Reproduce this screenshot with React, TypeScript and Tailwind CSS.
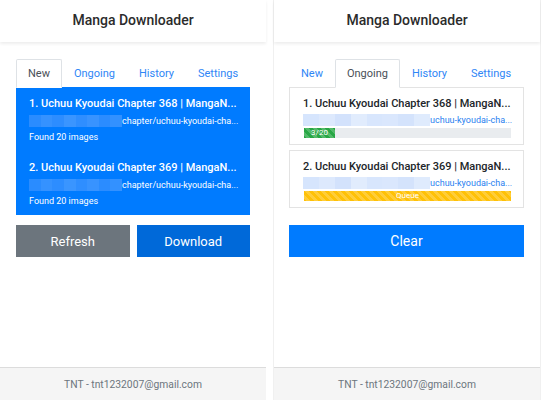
import React from "react";

const FONT = "font-['Roboto','Noto_Sans',sans-serif]";

const STRIPES =
  "bg-[linear-gradient(45deg,rgba(255,255,255,.2)_25%,transparent_25%,transparent_50%,rgba(255,255,255,.2)_50%,rgba(255,255,255,.2)_75%,transparent_75%,transparent)] bg-[length:8px_8px]";

function Header() {
  return (
    <div className="relative z-10 flex h-[42px] shrink-0 items-center justify-center pb-[1px] shadow-[0_2px_3px_rgba(0,0,0,0.07)]">
      <span className="text-[14px] font-medium text-[#2b2b2b]">Manga Downloader</span>
    </div>
  );
}

function Footer() {
  return (
    <div className="mt-auto flex h-[33px] shrink-0 items-center justify-center border-t border-[#dcdcdc] bg-[#f5f5f5] pt-[1px] text-[10.3px] text-[#6c757d]">
      TNT - tnt1232007@gmail.com
    </div>
  );
}

function Tabs({ active }: { active: string }) {
  const tabs = ["New", "Ongoing", "History", "Settings"];
  return (
    <div className="flex border-b border-[#e3e3e3]">
      {tabs.map((t) =>
        t === active ? (
          <div
            key={t}
            className="-mb-px rounded-t-[2px] border border-[#dee2e6] border-b-white bg-white px-[11px] pb-[3px] pt-[5px] text-[11px] leading-[18px] text-[#495057]"
          >
            {t}
          </div>
        ) : (
          <div
            key={t}
            className="border border-transparent px-[11px] pb-[3px] pt-[5px] text-[11px] leading-[18px] text-[#2f86f6]"
          >
            {t}
          </div>
        )
      )}
    </div>
  );
}

function BlurBlocks({ light }: { light: boolean }) {
  const cols = light
    ? ["#d6e5fd", "#dde9fd", "#d3e2fc", "#e1ecfd", "#d8e6fd", "#dae7fd", "#d4e3fc", "#dfebfd"]
    : ["#2a8cff", "#3592ff", "#2d8dff", "#3a95ff", "#2f8eff", "#3893ff", "#2b8cff", "#3391ff"];
  return (
    <div className="flex h-[12px] overflow-hidden">
      {cols.map((c, i) => (
        <div key={i} className="h-full flex-1" style={{ backgroundColor: c }} />
      ))}
    </div>
  );
}

function NewItem({ n, ch }: { n: number; ch: number }) {
  return (
    <div className="pb-[6px] pl-[13px] pr-[10px] pt-[9px]">
      <div className="overflow-hidden whitespace-nowrap text-[11px] font-medium leading-4">
        {n}. Uchuu Kyoudai Chapter {ch} | MangaN...
      </div>
      <div className="mt-px flex items-center leading-4">
        <div className="w-[93px] shrink-0">
          <BlurBlocks light={false} />
        </div>
        <span className="whitespace-nowrap text-[9px]">chapter/uchuu-kyoudai-cha...</span>
      </div>
      <div className="text-[9px] leading-4">Found 20 images</div>
    </div>
  );
}

function LeftPanel() {
  return (
    <div className="flex h-full w-[266px] shrink-0 flex-col bg-white">
      <Header />
      <div className="px-4 pt-[17px]">
        <Tabs active="New" />
        <div className="-mt-px bg-[#007bff] text-white">
          <NewItem n={1} ch={368} />
          <NewItem n={2} ch={369} />
        </div>
        <div className="mt-[10px] flex gap-[7px]">
          <button className="h-[32px] flex-1 bg-[#6c757d] pt-[1px] text-[13px] text-white">Refresh</button>
          <button className="h-[32px] flex-1 bg-[#0069d9] pt-[1px] text-[13px] text-white">Download</button>
        </div>
      </div>
      <Footer />
    </div>
  );
}

function OngoingCard({
  n,
  ch,
  mb,
  bar,
}: {
  n: number;
  ch: number;
  mb: boolean;
  bar: React.ReactNode;
}) {
  return (
    <div className={`border border-[#e3e3e3] pb-[6px] pl-[13px] pr-[10px] pt-[8px] ${mb ? "mb-[5px]" : ""}`}>
      <div className="overflow-hidden whitespace-nowrap text-[11px] font-medium leading-4 text-[#212529]">
        {n}. Uchuu Kyoudai Chapter {ch} | MangaN...
      </div>
      <div className="mt-px flex h-[14px] items-center">
        <div className="w-[127px] shrink-0">
          <BlurBlocks light />
        </div>
        <span className="whitespace-nowrap text-[9px] leading-[14px] text-[#2a7ff0]">uchuu-kyoudai-cha...</span>
      </div>
      <div className="mt-px pl-[1px]">{bar}</div>
    </div>
  );
}

function RightPanel() {
  return (
    <div className="flex h-full w-[268px] shrink-0 flex-col border-x border-[#f0f0f0] bg-white">
      <Header />
      <div className="pl-[15px] pr-[16px] pt-[17px]">
        <Tabs active="Ongoing" />
        <div className="-mt-px">
          <OngoingCard
            n={1}
            ch={368}
            mb
            bar={
              <div className="flex h-[10px] w-[207px] bg-[#e9ecef]">
                <div
                  className={`flex h-full w-[31px] items-center justify-center bg-[#28a745] text-[8px] leading-none text-white ${STRIPES}`}
                >
                  3/20
                </div>
              </div>
            }
          />
          <OngoingCard
            n={2}
            ch={369}
            mb={false}
            bar={
              <div
                className={`flex h-[10px] w-[207px] items-center justify-center bg-[#ffc107] text-[8px] leading-none text-white ${STRIPES}`}
              >
                Queue
              </div>
            }
          />
        </div>
        <button className="mt-[17px] h-[32px] w-full bg-[#007bff] pt-[1px] text-[14px] text-white">Clear</button>
      </div>
      <Footer />
    </div>
  );
}

export default function App() {
  return (
    <div className={`flex h-[400px] w-[541px] overflow-hidden bg-white ${FONT}`}>
      <LeftPanel />
      <div className="w-[7px] shrink-0 bg-white" />
      <RightPanel />
    </div>
  );
}
